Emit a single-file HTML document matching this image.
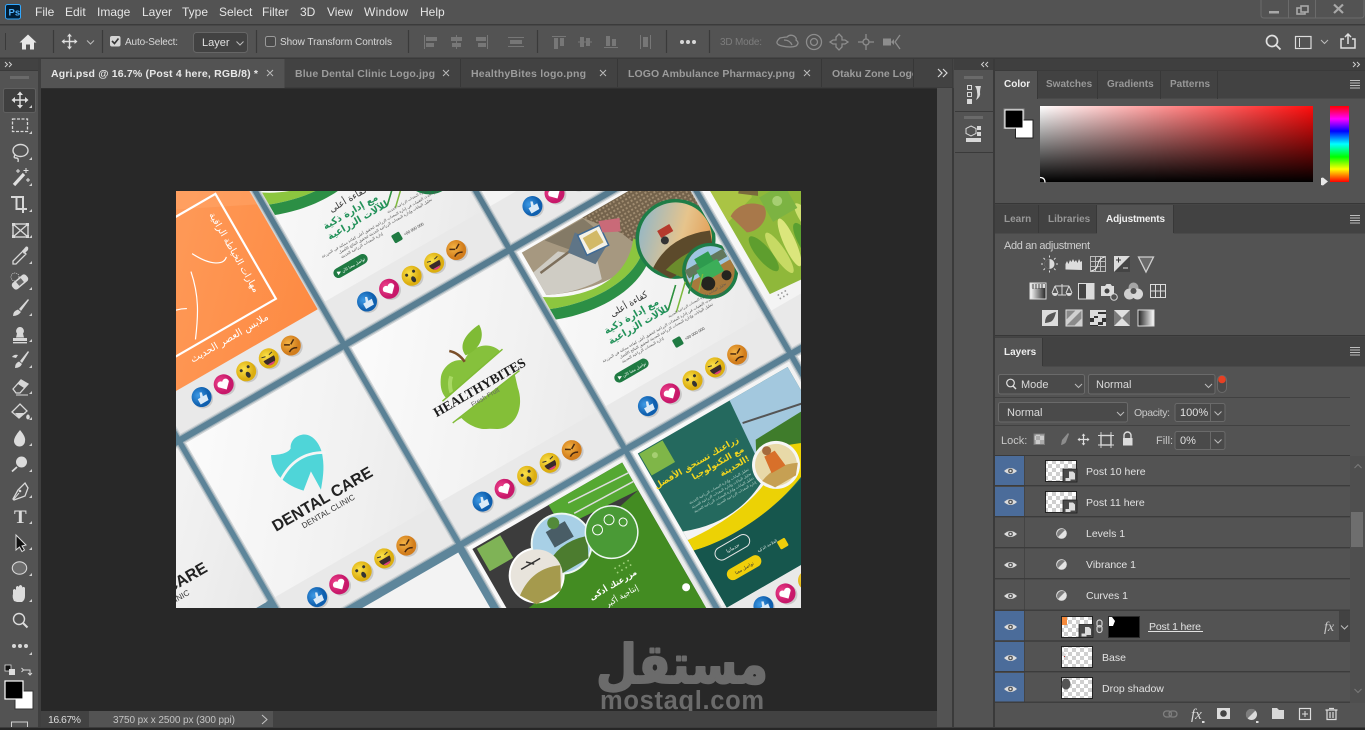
<!DOCTYPE html>
<html lang="en"><head><meta charset="utf-8"><title>Photoshop - Agri.psd</title>
<style>
html,body{margin:0;padding:0;background:#535353;width:1365px;height:730px;overflow:hidden}
svg{display:block;position:absolute;left:0;top:0}
text{font-family:"Liberation Sans",sans-serif;font-size:11px;fill:#dcdcdc;white-space:pre}
.ar{font-family:"DejaVu Sans","Noto Sans CJK SC",sans-serif}
.m{font-size:12px;fill:#e6e6e6}
.tb{font-weight:bold;fill:#9c9c9c;font-size:10.5px}
.ta{font-weight:bold;fill:#e8e8e8;font-size:10.5px}
.pt{font-weight:bold;fill:#989898;font-size:10px}
.pa{font-weight:bold;fill:#efefef;font-size:10px}
.l{font-size:10.5px;fill:#e2e2e2}
.ic{fill:none;stroke:#d8d8d8;stroke-width:1.4}
.if{fill:#d8d8d8;stroke:none}
.dim{fill:none;stroke:#8d8d8d;stroke-width:1.3}
.chev{fill:none;stroke:#a8a8a8;stroke-width:1}
.sep{stroke:#3a3a3a;stroke-width:1.2}
</style></head><body>
<svg width="1365" height="730" viewBox="0 0 1365 730" xmlns="http://www.w3.org/2000/svg">
<defs>
<clipPath id="art"><rect x="176" y="191" width="625" height="417"/></clipPath>
<clipPath id="card"><rect width="181" height="220"/></clipPath>
<clipPath id="cardS"><rect width="181" height="178"/></clipPath>
<clipPath id="tabclip"><rect x="822" y="59" width="91" height="28"/></clipPath>
<clipPath id="wm"><rect x="590" y="630" width="190" height="81"/></clipPath>
<linearGradient id="cg" x1="0" y1="0" x2="1" y2="1"><stop offset="0" stop-color="#fbfbfb"/><stop offset=".6" stop-color="#f1f1f1"/><stop offset="1" stop-color="#e8e8e8"/></linearGradient>
<linearGradient id="gut" x1="0" y1="0" x2="0" y2="1"><stop offset="0" stop-color="#557a8e"/><stop offset="1" stop-color="#5f879c"/></linearGradient>
<radialGradient id="eB" cx=".4" cy=".35"><stop offset="0" stop-color="#3f9be6"/><stop offset="1" stop-color="#0f5fae"/></radialGradient>
<radialGradient id="eP" cx=".4" cy=".35"><stop offset="0" stop-color="#f0468e"/><stop offset="1" stop-color="#c8186a"/></radialGradient>
<radialGradient id="eY" cx=".45" cy=".35"><stop offset="0" stop-color="#fbe14a"/><stop offset="1" stop-color="#dcae10"/></radialGradient>
<radialGradient id="eO" cx=".45" cy=".35"><stop offset="0" stop-color="#f5b545"/><stop offset="1" stop-color="#d27d1c"/></radialGradient>
<linearGradient id="sky1" x1="0" y1="0" x2="1" y2="1"><stop offset="0" stop-color="#7fb4d6"/><stop offset=".55" stop-color="#e6c48c"/><stop offset="1" stop-color="#e08a3a"/></linearGradient>
<linearGradient id="org" x1="0" y1="0" x2="1" y2="1"><stop offset="0" stop-color="#ffa264"/><stop offset="1" stop-color="#fd8a42"/></linearGradient>
<linearGradient id="hx" x1="0" y1="0" x2="1" y2="0"><stop offset="0" stop-color="#fff"/><stop offset="1" stop-color="#ff0d0d"/></linearGradient>
<linearGradient id="vx" x1="0" y1="0" x2="0" y2="1"><stop offset="0" stop-color="#000" stop-opacity="0"/><stop offset="1" stop-color="#000"/></linearGradient>
<linearGradient id="hue" x1="0" y1="0" x2="0" y2="1"><stop offset="0" stop-color="#f00"/><stop offset=".17" stop-color="#f0f"/><stop offset=".33" stop-color="#00f"/><stop offset=".5" stop-color="#0ff"/><stop offset=".67" stop-color="#0f0"/><stop offset=".83" stop-color="#ff0"/><stop offset="1" stop-color="#f00"/></linearGradient>
<linearGradient id="gr1" x1="0" y1="0" x2="1" y2="0"><stop offset="0" stop-color="#fff"/><stop offset="1" stop-color="#222"/></linearGradient>
<pattern id="chk" width="8" height="8" patternUnits="userSpaceOnUse"><rect width="8" height="8" fill="#fff"/><rect width="4" height="4" fill="#cfcfcf"/><rect x="4" y="4" width="4" height="4" fill="#cfcfcf"/></pattern>
<pattern id="furrow" width="4" height="4" patternUnits="userSpaceOnUse"><rect width="4" height="4" fill="#74634c"/><rect width="2" height="2" fill="#a08c70"/></pattern>

<g id="emo">
<circle cx="37" cy="201" r="10" fill="#000" opacity=".14"/><circle cx="36.500" cy="199" r="10" fill="url(#eB)"/><path d="M32 199h3l2-5 2 1-1 4h4l-1 6h-9z" fill="#dbeaf7"/>
<circle cx="63" cy="201" r="10" fill="#000" opacity=".14"/><circle cx="62" cy="199" r="10" fill="url(#eP)"/><path d="M62 205l-6-6a3.400 3.400 0 0 1 6-3 3.400 3.400 0 0 1 6 3z" fill="#fff"/>
<circle cx="89" cy="201" r="10" fill="#000" opacity=".14"/><circle cx="88" cy="199" r="10" fill="url(#eY)"/><circle cx="84" cy="196" r="1.500" fill="#333"/><circle cx="92" cy="196" r="1.500" fill="#333"/><ellipse cx="88" cy="203" rx="2.200" ry="3.200" fill="#333"/>
<circle cx="115" cy="201" r="10" fill="#000" opacity=".14"/><circle cx="114" cy="199" r="10" fill="url(#eY)"/><path d="M108 199h12c0 5-3 7-6 7s-6-2-6-7z" fill="#3a2a2a"/><path d="M110 204h8l-2 2h-4z" fill="#e0407a"/><path d="M108 195l4 1M120 195l-4 1" stroke="#333" fill="none"/>
<circle cx="140.500" cy="201" r="10" fill="#000" opacity=".14"/><circle cx="139.500" cy="199" r="10" fill="url(#eO)"/><path d="M134 195l5 3M145 195l-5 3M135 204q4-3 9 0" stroke="#4a2a10" stroke-width="1.500" fill="none"/>
</g>

<g id="base"><rect x="-2.400" y="-2.400" width="185.800" height="224.800" fill="#9fb0b9"/><rect x="-1.300" y="-1.300" width="183.600" height="222.600" fill="#d0d4d6"/><rect width="181" height="220" fill="url(#cg)"/><rect y="178" width="181" height="42" fill="#e9e9e9"/></g>
<g id="baseS"><rect x="-2.400" y="-2.400" width="185.800" height="180" fill="#9fb0b9"/><rect x="-1.300" y="-1.300" width="183.600" height="179" fill="#d0d4d6"/><rect width="181" height="178" fill="url(#cg)"/></g>

<g id="tooth">
<path d="M105 51C115 55 116 70 111.500 80C107 92 100 100 93.500 108L94 87L78 100C72 94 67 86 64.600 78C62 68 64 60 67.600 53C75 57 83 60 88 57C90 52 97 48 105 51Z" fill="#4fd5d8"/>
<path d="M63 80Q90 62 116 78" fill="none" stroke="#f5f5f5" stroke-width="2.800"/>
<text x="90" y="122" text-anchor="middle" font-weight="bold" style="font-size:16px;fill:#222" textLength="113">DENTAL CARE</text>
<text x="89" y="133" text-anchor="middle" style="font-size:8px;fill:#333" textLength="60">DENTAL CLINIC</text>
</g>
<g id="dental"><use href="#base"/><use href="#tooth"/><use href="#emo"/></g>
<g id="dentalL"><use href="#baseS"/><use href="#tooth"/></g>

<g id="healthy"><use href="#base"/>
<g clip-path="url(#card)">
<path d="M91 68C84 60 70 62 63 70C57 78 55 85 57 92L127 78C125 70 118 64 110 63C103 62 96 64 91 68Z" fill="#86c13c"/>
<path d="M72 75Q66 80 64 89" stroke="#a8d863" stroke-width="4" fill="none"/>
<path d="M91 69Q90 58 83 52" stroke="#7a4f2a" stroke-width="2.600" fill="none"/>
<path d="M95 64C93 52 105 45 122 44C122 56 112 66 95 64Z" fill="#7fbb35"/>
<path d="M54 116L128 105L124 118C122 130 112 146 95 146C86 146 82 140 76 138C68 134 62 124 60 116Z" fill="#84bf38"/>
<path d="M52 92L130 77" stroke="#7fbb35" stroke-width="1.400"/>
<path d="M50 116L134 104" stroke="#7fbb35" stroke-width="1.400"/>
<text x="91" y="103" text-anchor="middle" font-weight="bold" style="font-size:13.500px;fill:#1c1c1c;font-family:'Liberation Serif',serif" textLength="104">HEALTHYBITES</text>
<text x="91" y="112" text-anchor="middle" style="font-size:6.500px;fill:#666">Fresh Fruit</text>
<use href="#emo"/></g></g>

<g id="tractor"><use href="#base"/>
<g clip-path="url(#card)">
<path d="M4 3H181V60H110C85 78 40 70 4 52Z" fill="#a69880"/>
<path d="M74 3H181V60H110L100 36Z" fill="url(#furrow)"/>
<path d="M4 52V26L36 20L66 46L60 66C40 66 20 60 4 52Z" fill="#cfccc4"/>
<path d="M30 4H74L84 30L50 28Z" fill="#847a66"/>
<path d="M10 30L62 24" stroke="#7d6f5c" stroke-width="2.500"/>
<path d="M44 26L60 12L80 40L62 50Z" fill="#5f7587"/>
<rect x="60" y="17" width="24" height="22" fill="#f4f1e6" stroke="#3f6a96" stroke-width="1.500" transform="rotate(5 72 28)"/>
<rect x="64" y="21" width="16" height="14" fill="#d2b967"/>
<path d="M86 14L106 22L100 34L84 26Z" fill="#c96a78"/>
<path d="M0 52C30 72 80 84 108 46L112 60C88 84 40 82 0 66Z" fill="#8cc63f"/>
<path d="M0 66C40 82 88 84 112 60L114 70C86 96 36 92 0 78Z" fill="#2c8f45"/>
<circle cx="144" cy="68" r="40" fill="#1e7d47"/>
<circle cx="144" cy="68" r="36.500" fill="url(#sky1)"/>
<path d="M110 82Q140 62 178 78L170 100H120Z" fill="#5c4a2b"/><path d="M120 90Q150 82 170 92L150 104H130Z" fill="#6b8c2c"/>
<path d="M132 52h14v8h-14z" fill="#b53a2c"/><circle cx="134" cy="64" r="4" fill="#333"/>
<circle cx="158" cy="113" r="28" fill="#1e7d47"/>
<circle cx="158" cy="113" r="24.500" fill="#a7793c"/>
<path d="M134 113a24.500 24.500 0 0 1 49 0Z" fill="#9ec6e2"/>
<path d="M136 100h44v9h-44z" fill="#62775c"/>
<path d="M150 95h16v12h-16z" fill="#2e9b4e"/><path d="M146 106h24v14h-24z" fill="#3cae59"/><circle cx="150" cy="123" r="7" fill="#24241f"/><circle cx="170" cy="125" r="5" fill="#24241f"/>
<path d="M121 108L102 126M131 110L108 132M142 108L128 122M150 112L138 125" stroke="#7db93c" stroke-width="1.500"/><path d="M121 108L102 126M142 108L128 122" stroke="#2c8f45" stroke-width="1.500"/>
<text x="71" y="104" text-anchor="middle" class="ar" style="font-size:9px;fill:#333">كفاءة أعلى</text>
<text x="67" y="116" text-anchor="middle" class="ar" font-weight="bold" style="font-size:9.500px;fill:#23925a">مع إدارة ذكية</text>
<text x="69" y="127" text-anchor="middle" class="ar" font-weight="bold" style="font-size:9.500px;fill:#23925a">للآلات الزراعية</text>
<text x="132" y="133" text-anchor="middle" class="ar" style="font-size:3.500px;fill:#555">تحليل البيانات وإدارة المعدات الزراعية الحديثة</text>
<text x="90" y="139" text-anchor="middle" class="ar" style="font-size:3.800px;fill:#555">نستخدم أحدث التقنيات في إدارة المعدات الزراعية لتحقيق أعلى كفاءة ممكنة في المزرعة</text>
<text x="90" y="144" text-anchor="middle" class="ar" style="font-size:3.800px;fill:#555">تحليل البيانات وإدارة المعدات الزراعية الحديثة لتحقيق النتائج الأفضل</text>
<text x="60" y="149" text-anchor="middle" class="ar" style="font-size:3.800px;fill:#555">إدارة المعدات الزراعية الحديثة</text>
<rect x="21" y="155" width="38" height="10" rx="5" fill="#1f7a42"/><path d="M25 158l4 2-4 2z" fill="#fff"/>
<text x="43" y="162" text-anchor="middle" class="ar" style="font-size:4px;fill:#fff">تواصل معنا الآن</text>
<rect x="90" y="154" width="9" height="9" rx="1.500" fill="#1f7a42"/>
<text x="102" y="161" style="font-size:4px;fill:#444">+00 000 000</text>
<use href="#emo"/></g></g>

<g id="lettuce"><use href="#base"/>
<g clip-path="url(#card)">
<path d="M7 3H181V178L7 163Z" fill="#8fb83a"/>
<path d="M7 3H60L40 70L7 80Z" fill="#aac444"/>
<path d="M12 76C24 68 40 74 46 84C46 96 30 104 18 98Z" fill="#a8784a"/>
<path d="M30 60L46 72L58 50L44 44Z" fill="#7a6a3c"/>
<ellipse cx="22" cy="125" rx="7" ry="22" fill="#5e9e2e" transform="rotate(-10 22 125)"/>
<ellipse cx="36" cy="132" rx="6" ry="24" fill="#c7da64" transform="rotate(-4 36 132)"/>
<ellipse cx="50" cy="128" rx="6" ry="26" fill="#dbe67c" transform="rotate(6 50 128)"/>
<ellipse cx="64" cy="136" rx="7" ry="22" fill="#5a9f30"/>
<ellipse cx="78" cy="125" rx="7" ry="28" fill="#cfe070" transform="rotate(-8 78 125)"/>
<ellipse cx="94" cy="130" rx="7" ry="26" fill="#6aac36" transform="rotate(6 94 130)"/>
<ellipse cx="110" cy="128" rx="7" ry="30" fill="#c6da66"/>
<rect x="46" y="74" width="28" height="28" fill="#7cb342"/><circle cx="60" cy="86" r="5" fill="#a6cf72"/>
<g fill="#9c9c9c"><circle cx="14" cy="168" r=".9"/><circle cx="18" cy="168" r=".9"/><circle cx="22" cy="168" r=".9"/><circle cx="14" cy="172" r=".9"/><circle cx="18" cy="172" r=".9"/><circle cx="22" cy="172" r=".9"/></g>
</g></g>

<g id="orange"><use href="#base"/>
<g clip-path="url(#card)">
<rect width="181" height="181" fill="url(#org)"/>
<path d="M60 0L181 60V0Z" fill="#ffa56a" opacity=".5"/>
<rect x="28" y="30" width="122" height="121" fill="none" stroke="#fff" stroke-width="2.200"/>
<path d="M35 140C50 120 62 100 60 78M60 146C75 126 85 110 90 85M18 120C30 110 50 105 68 115M100 70C110 90 122 96 128 90" fill="none" stroke="#fff" stroke-width="1.200"/>
<text x="134" y="90" text-anchor="middle" class="ar" transform="rotate(90 134 90)" style="font-size:9.500px;fill:#fff">مهارات الخياطة الراقية</text>
<text x="90" y="165" text-anchor="middle" class="ar" style="font-size:10px;fill:#fff">ملابس العصر الحديث</text>
<use href="#emo"/></g></g>

<g id="circles"><use href="#baseS"/>
<g clip-path="url(#cardS)">
<rect x="4" y="4" width="173" height="160" fill="#3c3c3c"/>
<path d="M92 4H177V36L92 30Z" fill="#55a832"/>
<path d="M110 12L177 16M110 24L177 26" stroke="#ddd" stroke-width="1.500"/>
<path d="M4 86L60 78L100 52L177 36V178H4Z" fill="#438c22"/>
<rect x="8" y="6" width="27" height="26" fill="#7fb356"/>
<circle cx="46.500" cy="59" r="28" fill="#fff"/>
<circle cx="84" cy="44" r="31" fill="#eef7f3"/>
<circle cx="84" cy="44" r="29" fill="#a8d0e6"/><path d="M58 58Q80 40 110 50L100 70H70Z" fill="#4c7c2f"/><rect x="76" y="26" width="22" height="18" fill="#495d66"/><circle cx="87" cy="22" r="6" fill="#538a3a"/>
<circle cx="46.500" cy="59" r="26" fill="#e8e4dc"/><path d="M22 68Q46 50 72 62L60 84H32Z" fill="#a59a4d"/><path d="M36 46h22M44 42l6 6" stroke="#333" stroke-width="1.500"/>
<circle cx="133" cy="59" r="27" fill="#eef7f3"/><circle cx="133" cy="59" r="25.500" fill="#4a9a36"/>
<circle cx="122" cy="50" r="5" fill="none" stroke="#fff"/><circle cx="137" cy="47" r="5" fill="none" stroke="#fff"/><circle cx="148" cy="56" r="4" fill="none" stroke="#fff"/>
<g fill="#9fd07a"><circle cx="118" cy="92" r=".9"/><circle cx="123" cy="92" r=".9"/><circle cx="128" cy="92" r=".9"/><circle cx="133" cy="92" r=".9"/><circle cx="118" cy="97" r=".9"/><circle cx="123" cy="97" r=".9"/><circle cx="128" cy="97" r=".9"/><circle cx="133" cy="97" r=".9"/></g>
<text x="108" y="108" text-anchor="middle" class="ar" font-weight="bold" style="font-size:8px;fill:#fff">مزرعتك أذكى</text>
<text x="110" y="122" text-anchor="middle" class="ar" style="font-size:8px;fill:#fff">إنتاجية أكبر</text>
<circle cx="170" cy="144" r="4" fill="#fff"/>
</g></g>

<g id="teal"><use href="#base"/>
<g clip-path="url(#card)">
<rect x="4" y="4" width="173" height="178" fill="#24695e"/>
<path d="M110 4H177V84L105 66Z" fill="#a3c8de"/>
<path d="M110 30L177 44" stroke="#555" stroke-width="2"/>
<path d="M113 51L177 49V84L105 66Z" fill="#3f7c2b"/>
<rect x="5" y="5" width="27" height="25" fill="#7fb648"/><circle cx="18" cy="14" r="3" fill="#a6cf72"/>
<text x="98" y="44" text-anchor="end" class="ar" font-weight="bold" style="font-size:8.500px;fill:#f2d61f">زراعتك تستحق الأفضل</text>
<text x="98" y="55" text-anchor="end" class="ar" font-weight="bold" style="font-size:8.500px;fill:#f2d61f">مع التكنولوجيا</text>
<text x="98" y="66" text-anchor="end" class="ar" font-weight="bold" style="font-size:8.500px;fill:#f2d61f">الحديثة!</text>
<text x="92" y="74" text-anchor="end" class="ar" style="font-size:3.600px;fill:#b9d4cc">تحليل البيانات وإدارة المعدات الزراعية الحديثة</text>
<text x="92" y="79" text-anchor="end" class="ar" style="font-size:3.600px;fill:#b9d4cc">تحليل البيانات وإدارة المعدات الزراعية الحديثة</text>
<text x="92" y="84" text-anchor="end" class="ar" style="font-size:3.600px;fill:#b9d4cc">تحليل البيانات وإدارة المعدات الزراعية الحديثة</text>
<text x="92" y="89" text-anchor="end" class="ar" style="font-size:3.600px;fill:#b9d4cc">إدارة المعدات الزراعية الحديثة</text>
<path d="M4 94Q60 116 108 84L128 92Q70 118 4 104Z" fill="#f4f4f4"/>
<path d="M4 104C50 108 100 104 134 70L170 84C130 120 50 128 4 116Z" fill="#ecd205"/>
<path d="M4 116C50 128 130 120 177 84V182H4Z" fill="#16564d"/>
<circle cx="118" cy="83" r="24" fill="#f6f6f6"/><circle cx="118" cy="83" r="21" fill="#e8d9a8"/><path d="M98 90Q118 82 138 92L130 102H106Z" fill="#c6a053"/><path d="M112 70h12l2 18h-16z" fill="#d8702a"/><circle cx="117" cy="66" r="4.500" fill="#a56b3c"/>
<rect x="20" y="126" width="38" height="13" rx="6.500" fill="none" stroke="#e6e6e6" stroke-width="1"/>
<text x="39" y="135" text-anchor="middle" class="ar" style="font-size:5px;fill:#e6e6e6">حدمانيا</text>
<rect x="20" y="150" width="38" height="12" rx="6" fill="#f0cf0a"/>
<text x="39" y="158" text-anchor="middle" class="ar" style="font-size:4.500px;fill:#333">تواصل معنا</text>
<rect x="80" y="150" width="9" height="9" rx="1.500" fill="#f0cf0a"/>
<text x="70" y="150" text-anchor="middle" class="ar" style="font-size:4px;fill:#d6e4df">الفلاحة الذكية</text>
<use href="#emo"/></g></g>

<g id="plain"><use href="#base"/><use href="#emo"/></g>

<g id="eye"><path d="M-6.500 0Q0-6 6.500 0Q0 6-6.500 0Z" fill="#dcdcdc"/><circle r="2.400" fill="#555"/><circle r="1.100" fill="#dcdcdc"/></g>
<g id="so"><rect x="0" y="0" width="14" height="13" fill="#4a4a4a" stroke="#222" stroke-width=".8"/><path d="M6 2.500h4l2 2v6H6z" fill="#ddd"/><rect x="2.500" y="9" width="5" height="3" fill="#ddd"/></g>
<path id="tri" d="M0 3L3 0V3Z" fill="#cfcfcf"/>
<path id="burger" d="M-5-3.500H5M-5-1H5M-5 1.500H5M-5 4H5" stroke="#bdbdbd" stroke-width="1" fill="none"/>
<path id="dn" d="M-3.500-1.500L0 2L3.500-1.500" fill="none" stroke="#bcbcbc" stroke-width="1"/>
</defs>

<!-- base -->
<rect width="1365" height="730" fill="#535353"/>
<!-- menu bar -->
<rect y="24" width="1365" height="1.500" fill="#3b3b3b"/>
<rect x="5.500" y="4.500" width="15" height="14.500" rx="2" fill="#001e36" stroke="#31a8ff" stroke-width="1"/>
<text x="8.500" y="15.500" style="font-size:9.500px;font-weight:bold;fill:#4fb4ff">Ps</text>
<text class="m" x="35" y="16">File</text><text class="m" x="65" y="16">Edit</text><text class="m" x="97" y="16">Image</text><text class="m" x="142" y="16">Layer</text><text class="m" x="182" y="16">Type</text><text class="m" x="219" y="16">Select</text><text class="m" x="262" y="16">Filter</text><text class="m" x="300" y="16">3D</text><text class="m" x="327" y="16">View</text><text class="m" x="364" y="16" textLength="44">Window</text><text class="m" x="420" y="16">Help</text>
<!-- window controls -->
<path d="M1261 0v15q0 3 3 3h97q3 0 3-3V0" fill="none" stroke="#6b6b6b"/><path d="M1288.500 0v18M1315.500 0v18" stroke="#6b6b6b"/>
<rect x="1269" y="11" width="10" height="2.500" fill="#a8a8a8"/>
<rect x="1297" y="8" width="8" height="6" fill="none" stroke="#a8a8a8" stroke-width="1.600"/><rect x="1301" y="6" width="7" height="6" fill="#535353" stroke="#a8a8a8" stroke-width="1.600"/>
<path d="M1334 4.500l9 8.500M1343 4.500l-9 8.500" stroke="#a8a8a8" stroke-width="2.200"/>
<!-- options bar -->
<rect x="5" y="33" width="1" height="17" fill="#3a3a3a"/>
<path d="M28 34.500L19.500 42.500H22V49.500H26V44.500H30V49.500H34V42.500H36.500Z" fill="#e8e8e8"/>
<path class="sep" d="M53.500 30v23M102.500 30v23M256.500 30v23M408.500 30v23M537.500 30v23M666.500 30v23M709.500 30v23"/>
<g transform="translate(69.500 41.500)"><path d="M0-7V7M-7 0H7" stroke="#dedede" stroke-width="1.400"/><path d="M0-8l-2.500 3h5zM0 8l-2.500-3h5zM-8 0l3-2.500v5zM8 0l-3-2.500v5z" fill="#dedede"/></g>
<use href="#dn" x="90.500" y="42"/>
<rect x="110" y="36" width="10.500" height="10.500" rx="2" fill="#d4d4d4"/><path d="M112 41l2.500 2.500 4-5" fill="none" stroke="#333" stroke-width="1.600"/>
<text x="125" y="45" style="fill:#d8d8d8;font-size:10px" textLength="53">Auto-Select:</text>
<rect x="193.500" y="32.500" width="54" height="20" rx="3" fill="#424242" stroke="#666"/>
<text x="202" y="46" style="fill:#e0e0e0">Layer</text><use href="#dn" x="240" y="43"/>
<rect x="265.500" y="36.500" width="10" height="10" rx="2" fill="#4a4a4a" stroke="#9a9a9a"/>
<text x="280" y="45" style="fill:#d8d8d8;font-size:10px" textLength="112">Show Transform Controls</text>
<!-- align icons -->
<g fill="#777" stroke="none">
<rect x="424" y="35" width="1" height="14"/><rect x="426" y="37" width="11" height="4"/><rect x="426" y="43" width="8" height="4"/>
<rect x="456" y="35" width="1" height="14"/><rect x="451" y="37" width="11" height="4"/><rect x="452" y="43" width="9" height="4"/>
<rect x="487" y="35" width="1" height="14"/><rect x="476" y="37" width="10" height="4"/><rect x="478" y="43" width="8" height="4"/>
<rect x="508" y="37" width="16" height="1"/><rect x="510" y="40" width="12" height="4"/><rect x="508" y="46" width="16" height="1"/>
<rect x="552" y="36" width="14" height="1"/><rect x="554" y="38" width="4" height="11"/><rect x="560" y="38" width="4" height="8"/>
<rect x="578" y="41.500" width="14" height="1"/><rect x="580" y="37" width="4" height="10"/><rect x="586" y="38" width="4" height="8"/>
<rect x="604" y="47" width="14" height="1"/><rect x="606" y="36" width="4" height="10"/><rect x="612" y="39" width="4" height="7"/>
<rect x="640" y="35" width="1" height="14"/><rect x="650" y="35" width="1" height="14"/><rect x="643" y="37" width="5" height="10"/>
</g>
<circle cx="682" cy="42" r="2" fill="#d8d8d8"/><circle cx="688" cy="42" r="2" fill="#d8d8d8"/><circle cx="694" cy="42" r="2" fill="#d8d8d8"/>
<text x="720" y="45" style="fill:#7d7d7d;font-size:10px" textLength="42">3D Mode:</text>
<g class="dim">
<path d="M782 46q-9-2-2-8q5-1 7-1q3-3 7-1q3 2 2 4q4 3 0 6q-5 2-14 0zM784 40q6 0 8 5"/>
<circle cx="814" cy="42" r="7.500"/><circle cx="814" cy="42" r="3.500"/>
<path d="M839 34l3 3v3h3l3 2-3 2h-3v3l-3 3-3-3v-3h-3l-3-2 3-2h3v-3z"/>
<circle cx="866" cy="42" r="3"/><path d="M866 34v5M866 45v5M858 42h5M869 42h5"/>
</g>
<path d="M883 38.500h8v7h-8z M891 42l3-3v6z" fill="#8d8d8d"/><path d="M900 35l-5 7 5 7" class="dim"/>
<circle cx="1272" cy="41" r="5.500" fill="none" stroke="#e0e0e0" stroke-width="1.700"/><path d="M1276 45l4.500 4.500" stroke="#e0e0e0" stroke-width="1.800"/>
<rect x="1295.500" y="36.500" width="15.500" height="12" fill="none" stroke="#dcdcdc" stroke-width="1.200"/><path d="M1299.500 38v9" stroke="#dcdcdc"/>
<use href="#dn" x="1324.500" y="41.500"/>
<path d="M1344 39h-3v9h14v-9h-3M1348 44V34M1345 37l3-3 3 3" fill="none" stroke="#e0e0e0" stroke-width="1.500"/>
<rect y="57.500" width="1365" height="1.500" fill="#3a3a3a"/>

<!-- left tool panel -->
<rect x="0" y="59" width="38" height="11" fill="#424242"/>
<path d="M5 62l2.500 2.500L5 67M9 62l2.500 2.500L9 67" fill="none" stroke="#cfcfcf"/>
<rect x="38" y="59" width="3" height="668" fill="#3f3f3f"/>
<rect x="0" y="70" width="38" height="1" fill="#3a3a3a"/>
<rect x="10" y="76" width="19" height="3" fill="#6a6a6a"/>
<rect x="3.500" y="88.500" width="32" height="24" rx="2" fill="#3f3f3f" stroke="#5f5f5f"/>

<g transform="translate(20 100)"><path d="M0-7V7M-7 0H7" stroke="#e0e0e0" stroke-width="1.400"/><path d="M0-8.500l-3 3.500h6zM0 8.500l-3-3.500h6zM-8.500 0l3.500-3v6zM8.500 0l-3.500-3v6z" fill="#e0e0e0"/></g>
<rect x="12.500" y="119" width="15" height="12.500" fill="none" stroke="#d8d8d8" stroke-width="1.300" stroke-dasharray="3 1.500"/>
<g class="ic"><ellipse cx="20.500" cy="150.500" rx="7.500" ry="6"/><path d="M15 155q-2 3 1 3t2 4"/></g>
<g transform="translate(20 177)"><path d="M-6 8L4-3" stroke="#e0e0e0" stroke-width="3.200"/><path d="M6-9v5M3.500-6.500h5M-2-8v4M-4-6h4M8 1v4M6 3h4" stroke="#e0e0e0" fill="none"/></g>
<path d="M11 197h5.500V209H27M16.500 197H23V203M23 203V213" fill="none" stroke="#d8d8d8" stroke-width="2"/>
<g class="ic"><rect x="13" y="224" width="15" height="13"/><path d="M13 224l15 13M28 224l-15 13"/></g><g class="if"><rect x="12" y="223" width="3" height="3"/><rect x="26" y="223" width="3" height="3"/><rect x="12" y="235" width="3" height="3"/><rect x="26" y="235" width="3" height="3"/></g>
<g transform="translate(20 256)"><path d="M-7 8L-7 5L3-5L6-2L-4 8Z" fill="#525252" stroke="#d8d8d8" stroke-width="1.300"/><path d="M2-5L6-9.500Q9-10 8-6L4-2Z" fill="#d8d8d8"/></g>
<g transform="translate(20 282) rotate(-40)"><rect x="-9" y="-4" width="18" height="8" rx="3" fill="#d8d8d8"/><rect x="-3" y="-2.500" width="6" height="5" fill="#666"/></g><circle cx="15" cy="277" r="4" fill="none" stroke="#d8d8d8" stroke-width=".8" stroke-dasharray="1 1"/>
<g transform="translate(20 308)"><path d="M8-9L-1 1L1 3L9-8Z" fill="#d8d8d8"/><path d="M-2 1.500Q-7 3-7 8Q-2 8 1 4Z" fill="#d8d8d8"/></g>
<g class="if"><path d="M20 327a4 4 0 0 1 3 6.500l1 4h-8l1-4a4 4 0 0 1 3-6.500z"/><rect x="13" y="338" width="14" height="3"/><rect x="13" y="342" width="14" height="1.400"/></g>
<g transform="translate(20 360)"><path d="M8-9L0 1L2 3L9-8Z" fill="#d8d8d8"/><path d="M-1 1.500Q-5 3-5 8Q0 8 2 4Z" fill="#d8d8d8"/><path d="M-8-3q2-3 6-2l-2 3z" fill="#d8d8d8"/></g>
<g transform="translate(20 386)"><path d="M-7 3L1-6L8-2L0 7H-4Z" fill="none" stroke="#d8d8d8" stroke-width="1.300"/><path d="M-2-2L1-6L8-2L4 2Z" fill="#d8d8d8"/><path d="M-4 9H8" stroke="#d8d8d8"/></g>
<g transform="translate(20 412)"><path d="M-8 0L0-8L7-1L-1 6Z" fill="none" stroke="#d8d8d8" stroke-width="1.300"/><path d="M-5 1H6L-1 6Z" fill="#d8d8d8"/><ellipse cx="8" cy="5" rx="1.800" ry="2.500" fill="#d8d8d8"/></g>
<path d="M20 430q6 7 5 11a5.500 5.500 0 0 1-11 0q0-4 6-11z" fill="#dcdcdc"/>
<circle cx="21.500" cy="462" r="5.500" fill="#dcdcdc"/><path d="M17 467l-5 4.500" stroke="#dcdcdc" stroke-width="1.800"/>
<path d="M25 483l3 5-3 8-11 4-1-1 5-9z" fill="none" stroke="#d8d8d8" stroke-width="1.300"/><circle cx="20" cy="491" r="1.300" fill="#d8d8d8"/><path d="M14 499l5-6" stroke="#d8d8d8"/>
<text x="14" y="523" style="font-family:'Liberation Serif',serif;font-size:19px;font-weight:bold;fill:#dcdcdc">T</text>
<path d="M16 535V550L19.500 547L22 551.500L24.500 550L22 546L26 545Z" fill="#111" stroke="#dcdcdc" stroke-width="1"/>
<ellipse cx="19.500" cy="568" rx="7.200" ry="6.200" fill="#6d6d6d" stroke="#d8d8d8" stroke-width="1.100"/>
<path d="M14 601Q12 597 13 594L13 590Q14.500 588 16 590L16 587Q17.500 585 19 587L19 586Q20.500 584 22 586L22.500 587.500Q24 586 25 588L25 596Q25 600 22 602L17 602Z" fill="#dcdcdc"/>
<circle cx="19" cy="619" r="5.500" fill="none" stroke="#dcdcdc" stroke-width="1.400"/><path d="M23 623l4.500 4.500" stroke="#dcdcdc" stroke-width="2"/>
<circle cx="14" cy="646" r="2" fill="#d8d8d8"/><circle cx="20" cy="646" r="2" fill="#d8d8d8"/><circle cx="26" cy="646" r="2" fill="#d8d8d8"/>
<use href="#tri" x="29" y="105"/><use href="#tri" x="29" y="131"/><use href="#tri" x="29" y="157"/><use href="#tri" x="29" y="183"/><use href="#tri" x="29" y="209"/><use href="#tri" x="29" y="235"/><use href="#tri" x="29" y="261"/><use href="#tri" x="29" y="287"/><use href="#tri" x="29" y="313"/><use href="#tri" x="29" y="339"/><use href="#tri" x="29" y="365"/><use href="#tri" x="29" y="391"/><use href="#tri" x="29" y="417"/><use href="#tri" x="29" y="443"/><use href="#tri" x="29" y="469"/><use href="#tri" x="29" y="495"/><use href="#tri" x="29" y="521"/><use href="#tri" x="29" y="547"/><use href="#tri" x="29" y="573"/><use href="#tri" x="29" y="599"/><use href="#tri" x="29" y="652"/>
<rect x="5" y="665" width="6" height="6" fill="#111" stroke="#ddd" stroke-width=".8"/><rect x="9" y="669" width="6" height="6" fill="#ddd"/>
<path d="M23 670h7v5M21.500 668l2 2-2 2M28 673l2 2 2-2" fill="none" stroke="#d8d8d8"/>
<rect x="15" y="691" width="18" height="18" fill="#fff" stroke="#333"/>
<rect x="5" y="681" width="18" height="18" fill="#000" stroke="#fff" stroke-width="1.200"/>
<path d="M11.500 727v-5h16v5" fill="none" stroke="#cfcfcf"/>

<!-- canvas -->
<rect x="41" y="88" width="896" height="623" fill="#282828"/>
<!-- tabs -->
<rect x="41" y="59" width="912" height="28.500" fill="#424242"/>
<rect x="41" y="59" width="243.500" height="29" fill="#535353"/>
<path d="M460.500 59v28M617.500 59v28M821.500 59v28M913.500 59v28M953 59v29" stroke="#373737"/>
<rect x="41" y="87.500" width="912" height="1" fill="#373737"/>
<rect x="41" y="87" width="243.500" height="1" fill="#535353"/>
<text class="ta" x="51" y="77" textLength="207">Agri.psd @ 16.7% (Post 4 here, RGB/8) *</text>
<text class="tb" x="295" y="77" textLength="140">Blue Dental Clinic Logo.jpg</text>
<text class="tb" x="471" y="77" textLength="115">HealthyBites logo.png</text>
<text class="tb" x="628" y="77" textLength="167">LOGO Ambulance Pharmacy.png</text>
<g clip-path="url(#tabclip)"><text class="tb" x="832" y="77">Otaku Zone Logo.png</text></g>
<path d="M267 70l6 6M273 70l-6 6M443 70l6 6M449 70l-6 6M600 70l6 6M606 70l-6 6M804 70l6 6M810 70l-6 6" stroke="#bcbcbc" stroke-width="1" fill="none"/>
<path d="M938 69l4 4-4 4M943 69l4 4-4 4" fill="none" stroke="#d8d8d8" stroke-width="1.200"/>
<!-- canvas scrollbar strip -->
<rect x="937" y="88" width="16" height="639" fill="#535353"/>
<rect x="952" y="88" width="2" height="639" fill="#3a3a3a"/>

<!-- artwork -->
<g clip-path="url(#art)">
<rect x="176" y="191" width="625" height="417" fill="url(#gut)"/>
<use href="#dentalL" transform="translate(186 443) rotate(-30) translate(-191 0)"/>
<use href="#dental" transform="translate(186 443) rotate(-30)"/>
<use href="#healthy" transform="translate(186 443) rotate(-30) translate(191 0)"/>
<use href="#tractor" transform="translate(186 443) rotate(-30) translate(382 0)"/>
<use href="#lettuce" transform="translate(186 443) rotate(-30) translate(573 0)"/>
<use href="#orange" transform="translate(186 443) rotate(-30) translate(0 -231)"/>
<use href="#tractor" transform="translate(186 443) rotate(-30) translate(191 -231)"/>
<use href="#plain" transform="translate(186 443) rotate(-30) translate(382 -231)"/>
<path d="M70 231H181V295H70Z" transform="translate(186 443) rotate(-30)" fill="#f3f3f3"/>
<use href="#circles" transform="translate(186 443) rotate(-30) translate(191 231)"/>
<use href="#teal" transform="translate(186 443) rotate(-30) translate(382 231)"/>
<use href="#base" transform="translate(186 443) rotate(-30) translate(573 231)"/>
</g>

<!-- watermark -->
<g clip-path="url(#wm)">
<text transform="translate(682 683) scale(.87 1)" x="0" y="0" text-anchor="middle" class="ar" font-weight="bold" stroke="#6b6b6b" stroke-width="2" stroke-linejoin="round" style="font-size:54px;fill:#6b6b6b">مستقل</text>
<text x="682" y="709" text-anchor="middle" font-weight="bold" style="font-size:25.500px;fill:#6b6b6b" textLength="164">mostaql.com</text>
</g>

<!-- status bar -->
<rect x="41" y="711" width="896" height="16" fill="#424242"/>
<rect x="89" y="711" width="184" height="16" fill="#535353"/>
<text x="48" y="723" style="fill:#dcdcdc;font-size:10.5px" textLength="33">16.67%</text>
<text x="113" y="723" style="fill:#c4c4c4;font-size:10px" textLength="122">3750 px x 2500 px (300 ppi)</text>
<path d="M262 715l5 4.500-5 4.500" fill="none" stroke="#c4c4c4"/>
<rect y="727.500" width="1365" height="2.500" fill="#262626"/>

<!-- right dock -->
<rect x="954" y="59" width="411" height="11" fill="#3f3f3f"/>
<path d="M984 62l-2.500 2.500L984 67M988 62l-2.500 2.500L988 67M1353 62l2.500 2.500-2.500 2.500M1357 62l2.500 2.500-2.500 2.500" fill="none" stroke="#cfcfcf"/>
<rect x="954" y="70" width="39" height="657" fill="#535353"/>
<rect x="993" y="59" width="2" height="668" fill="#3a3a3a"/>
<path d="M955 111.500h38M955 152.500h38" stroke="#3a3a3a"/>
<rect x="964" y="76" width="19" height="3" fill="#6a6a6a"/><rect x="964" y="116" width="19" height="3" fill="#6a6a6a"/>
<g fill="none" stroke="#d8d8d8"><rect x="967.500" y="85.500" width="4" height="4"/><rect x="967.500" y="92.500" width="4" height="4"/></g><rect x="967" y="99" width="5" height="5" fill="#d8d8d8"/>
<path d="M975 86h6q-1 3-1 6q1 5-4 8q2-4 1-8q0-3-2-6z" fill="#d8d8d8"/>
<path d="M971 126l5 2.500v5l-5 2.500-5-2.500v-5z" fill="none" stroke="#d8d8d8"/><rect x="977" y="126" width="4" height="4" fill="#d8d8d8"/><rect x="977" y="132" width="4" height="4" fill="#d8d8d8"/><rect x="966" y="138" width="15" height="4" fill="#d8d8d8"/>

<!-- color panel -->
<rect x="995" y="70" width="370" height="28.500" fill="#424242"/>
<path d="M995 70.500h370" stroke="#3a3a3a"/>
<rect x="995" y="71" width="42.500" height="28" fill="#535353"/>
<path d="M1037.500 71v28M1097.500 71v28M1160.500 71v28M1217.500 71v28" stroke="#383838"/>
<text class="pa" x="1004" y="87">Color</text><text class="pt" x="1046" y="87">Swatches</text><text class="pt" x="1107" y="87">Gradients</text><text class="pt" x="1170" y="87">Patterns</text>
<use href="#burger" x="1355" y="84"/>
<rect x="1004" y="109" width="20" height="19.500" fill="none" stroke="#8a8a8a"/>
<rect x="1015.500" y="120" width="17.500" height="18" fill="#fff" stroke="#222"/>
<rect x="1005" y="110" width="18" height="18" fill="#000" stroke="#fff" stroke-width="1"/>
<rect x="1040" y="106" width="273" height="76" fill="url(#hx)"/>
<rect x="1040" y="106" width="273" height="76" fill="url(#vx)"/>
<path d="M1040 177.500q5 0 5 5" fill="none" stroke="#fff" stroke-width="1.200"/>
<rect x="1330" y="106" width="19" height="76" fill="url(#hue)"/>
<path d="M1321 178v7l2 .5 5-4-5-4z" fill="#e8e8e8"/>
<rect x="995" y="203" width="370" height="1.500" fill="#373737"/>

<!-- adjustments panel -->
<rect x="995" y="205" width="370" height="28.500" fill="#424242"/>
<rect x="1097" y="205" width="76.500" height="29" fill="#535353"/>
<path d="M1038.500 205v28M1096.500 205v28M1173.500 205v28" stroke="#383838"/>
<text class="pt" x="1004" y="222">Learn</text><text class="pt" x="1048" y="222">Libraries</text><text class="pa" x="1106" y="222" textLength="59">Adjustments</text>
<use href="#burger" x="1355" y="219"/>
<text x="1004" y="249" style="fill:#cfcfcf" textLength="86">Add an adjustment</text>

<!-- row1 -->
<g transform="translate(1049.500 264)"><circle r="5" fill="#dcdcdc"/><path d="M0-5a5 5 0 0 0 0 10z" fill="#555"/><path d="M0-8.500v2M0 6.500v2M-8.500 0h2M6.500 0h2M-6-6l1.500 1.500M6-6l-1.500 1.500M-6 6l1.500-1.500M6 6l-1.500-1.500" stroke="#dcdcdc"/></g>
<path d="M1065.500 269.500V264l1.500-3 1.500 3 1.500-4 1.500 2 1.500-3 1.500 3 1.500-2 1.500 3 1.500-4 1.500 3 1.500-1v9z" fill="#dcdcdc"/>
<g fill="none" stroke="#bcbcbc"><rect x="1090.500" y="256.500" width="15" height="15"/><path d="M1095.500 256.500v15M1100.500 256.500v15M1090.500 261.500h15M1090.500 266.500h15"/></g><path d="M1091 271q6-1 7-7t7-7" fill="none" stroke="#e8e8e8"/>
<rect x="1114" y="256" width="16" height="16" fill="#dcdcdc"/><path d="M1114 272l16-16v16z" fill="#444"/><path d="M1116 260h5M1118.500 257.500v5" stroke="#333"/><path d="M1123 268h5" stroke="#ddd"/>
<path d="M1138.500 257h15l-7.500 15z" fill="#6a6a6a" stroke="#cfcfcf" stroke-width="1.300"/>
<!-- row2 -->
<rect x="1030" y="283" width="16" height="16" fill="url(#gr1)" stroke="#dcdcdc"/><path d="M1031 284h14v4h-14z" fill="#dcdcdc"/><path d="M1033 284v5M1036 284v5M1039 284v5M1042 284v5" stroke="#444"/>
<path d="M1062 284v11M1058 295h8M1055 286h14M1055 286l-3 7M1055 286l3 7M1069 286l-3 7M1069 286l3 7" fill="none" stroke="#d8d8d8"/><path d="M1052 293h6a3 3 0 0 1-6 0zM1066 293h6a3 3 0 0 1-6 0z" fill="#d8d8d8"/>
<rect x="1078.500" y="283.500" width="15.500" height="15.500" fill="#444" stroke="#dcdcdc"/><rect x="1086" y="283.500" width="8" height="15.500" fill="#dcdcdc"/>
<path d="M1101 286h4l1.500-2h4l1.500 2h2v10h-13z" fill="#dcdcdc"/><circle cx="1107" cy="291" r="2.500" fill="#444"/><circle cx="1114" cy="297" r="3.300" fill="#535353" stroke="#d8d8d8"/>
<circle cx="1133.500" cy="287.500" r="5" fill="#a5a5a5"/><circle cx="1129.500" cy="294" r="5.500" fill="#cfcfcf"/><circle cx="1137.500" cy="294" r="5.500" fill="#d8d8d8"/><circle cx="1133.500" cy="291" r="3" fill="#555"/>
<g fill="none" stroke="#dcdcdc"><rect x="1150.500" y="284.500" width="15" height="13"/><path d="M1155.500 284.500v13M1160.500 284.500v13M1150.500 291h15"/></g>
<!-- row3 -->
<rect x="1042" y="310" width="16" height="16" fill="#dcdcdc"/><path d="M1045 323q0-7 5-9t6-2q-2 9-6 10t-5 1z" fill="#555"/>
<rect x="1066" y="310" width="16" height="16" fill="#8a8a8a" stroke="#dcdcdc"/><path d="M1066 320l10-10h6l-16 16zM1074 326l8-8v8z" fill="#d0d0d0"/>
<rect x="1090" y="310" width="16" height="16" fill="#dcdcdc"/><path d="M1090 322h4v-4h4v-4h8v-2h-8v4h-4v2h-4zM1090 326h8v-4h4v-4h4v4h-3v3h-13z" fill="#333"/>
<rect x="1114" y="310" width="16" height="16" fill="#e0e0e0"/><path d="M1114 310l8 8-8 8zM1130 310l-8 8 8 8z" fill="#7a7a7a"/>
<rect x="1138" y="310" width="16" height="16" fill="url(#gr1)" stroke="#dcdcdc" transform="matrix(-1 0 0 1 2292 0)"/>
<rect x="995" y="335" width="370" height="1.500" fill="#373737"/>

<!-- layers panel -->
<rect x="995" y="337" width="370" height="29.500" fill="#424242"/>
<rect x="995" y="338" width="47.500" height="29" fill="#535353"/><path d="M1042.500 338v28" stroke="#383838"/>
<text class="pa" x="1004" y="355">Layers</text><use href="#burger" x="1355" y="351"/>
<rect x="998.500" y="374.500" width="86" height="19.500" rx="2" fill="#4a4a4a" stroke="#6a6a6a"/>
<circle cx="1010.500" cy="383" r="3.800" fill="none" stroke="#e0e0e0" stroke-width="1.200"/><path d="M1013 386l3 3" stroke="#e0e0e0" stroke-width="1.400"/>
<text x="1021" y="388" style="fill:#dadada">Mode</text><use href="#dn" x="1078.500" y="385.500"/>
<rect x="1088.500" y="374.500" width="126.500" height="19.500" rx="2" fill="#4a4a4a" stroke="#6a6a6a"/><text x="1096" y="388" style="fill:#dadada">Normal</text><use href="#dn" x="1208.500" y="385.500"/>
<rect x="1217.500" y="375.500" width="9" height="17" rx="4.500" fill="#4a4a4a" stroke="#6a6a6a"/><circle cx="1222" cy="379.500" r="3.800" fill="#e74023"/>
<path d="M995 397.500h355" stroke="#414141"/>
<rect x="998.500" y="402.500" width="129" height="19.500" rx="2" fill="#4a4a4a" stroke="#6a6a6a"/><text x="1007" y="416" style="fill:#dadada">Normal</text><use href="#dn" x="1120.500" y="413.500"/>
<text x="1134" y="416" style="fill:#c8c8c8;font-size:10.5px" textLength="36">Opacity:</text>
<rect x="1175" y="403.500" width="50" height="18" rx="2" fill="#4a4a4a" stroke="#6a6a6a"/><path d="M1210.500 403.500v18" stroke="#6a6a6a"/><text x="1180" y="416" style="fill:#e0e0e0">100%</text><use href="#dn" x="1218" y="413"/>
<path d="M995 425.500h355" stroke="#414141"/>
<text x="1001" y="444" style="fill:#c8c8c8">Lock:</text>
<rect x="1034" y="434" width="10.500" height="10.500" fill="url(#chk)" stroke="#8a8a8a" opacity=".7"/>
<path d="M1068 433l-6 7-1 5q4-1 5-3l3-8z" fill="#8d8d8d"/>
<g transform="translate(1083.500 439.500) scale(.75)"><path d="M0-7V7M-7 0H7" stroke="#dedede" stroke-width="1.600"/><path d="M0-8l-2.500 3h5zM0 8l-2.500-3h5zM-8 0l3-2.500v5zM8 0l-3-2.500v5z" fill="#dedede"/></g>
<g class="ic" stroke-width="1.100"><rect x="1101" y="435.500" width="10" height="9.500"/><path d="M1098 435.500h16M1101 432v16M1111 432v16M1098 445h16" stroke-width=".9"/></g>
<path d="M1124 438v-2.500a3.500 3.500 0 0 1 7 0V438" fill="none" stroke="#dcdcdc" stroke-width="1.400"/><rect x="1123" y="438" width="9.500" height="7.500" fill="#dcdcdc"/>
<text x="1156" y="444" style="fill:#c8c8c8">Fill:</text>
<rect x="1175" y="431.500" width="50" height="18" rx="2" fill="#4a4a4a" stroke="#6a6a6a"/><path d="M1210.500 431.500v18" stroke="#6a6a6a"/><text x="1180" y="444" style="fill:#e0e0e0">0%</text><use href="#dn" x="1218" y="441"/>
<rect x="995" y="455" width="355" height="1" fill="#3a3a3a"/>

<!-- layer rows -->
<g fill="#4b6c9a"><rect x="995" y="456" width="29" height="30"/><rect x="995" y="487" width="29" height="30"/><rect x="995" y="611" width="29" height="30"/><rect x="995" y="642" width="29" height="30"/><rect x="995" y="673" width="29" height="29"/></g>
<path d="M1024.500 456v246" stroke="#444"/>
<path d="M995 485.700h355M995 516.700h355M995 547.700h355M995 578.700h355M995 610.200h355M995 641h355M995 671.700h355M995 702.200h370" stroke="#3c3c3c" stroke-width="1.400"/>
<use href="#eye" x="1010.500" y="471"/><use href="#eye" x="1010.500" y="502"/><use href="#eye" x="1010.500" y="534"/><use href="#eye" x="1010.500" y="565"/><use href="#eye" x="1010.500" y="596"/><use href="#eye" x="1010.500" y="627"/><use href="#eye" x="1010.500" y="658"/><use href="#eye" x="1010.500" y="689"/>

<rect x="1045.500" y="460.500" width="31" height="21" fill="url(#chk)" stroke="#222"/><use href="#so" x="1063" y="469"/><text class="l" x="1086" y="475">Post 10 here</text>
<rect x="1045.500" y="491.500" width="31" height="21" fill="url(#chk)" stroke="#222"/><use href="#so" x="1063" y="500"/><text class="l" x="1086" y="506">Post 11 here</text>
<circle cx="1061.500" cy="533.500" r="5.300" fill="#e4e4e4"/><path d="M1065 530a5 5 0 0 0-7 7z" fill="#7d7d7d"/><text class="l" x="1086" y="537">Levels 1</text>
<circle cx="1061.500" cy="564.500" r="5.300" fill="#e4e4e4"/><path d="M1065 561a5 5 0 0 0-7 7z" fill="#7d7d7d"/><text class="l" x="1086" y="568">Vibrance 1</text>
<circle cx="1061.500" cy="595.500" r="5.300" fill="#e4e4e4"/><path d="M1065 592a5 5 0 0 0-7 7z" fill="#7d7d7d"/><text class="l" x="1086" y="599">Curves 1</text>

<rect x="1061.500" y="616.500" width="31" height="21" fill="url(#chk)" stroke="#222"/><path d="M1062 617h5v8h-5z" fill="#f58a3c"/><use href="#so" x="1079" y="624.500"/>
<rect x="1097" y="620" width="5" height="7" rx="2.500" fill="none" stroke="#cfcfcf" stroke-width="1.200"/><rect x="1097" y="625.500" width="5" height="7" rx="2.500" fill="none" stroke="#cfcfcf" stroke-width="1.200"/>
<rect x="1108.500" y="616.500" width="31" height="21" fill="#000" stroke="#2a2a2a"/><path d="M1109 617h3l3 4-2 5h-4z" fill="#fff"/>
<text class="l" x="1149" y="630" textLength="52">Post 1 here</text><path d="M1148 631.500h55" stroke="#e2e2e2" stroke-width="1"/>
<text x="1324" y="631" style="font-family:'Liberation Serif',serif;font-style:italic;font-size:14px;fill:#c8c8c8">fx</text>
<rect x="1339" y="611" width="11" height="30" fill="#424242"/><use href="#dn" x="1344.500" y="627"/>

<rect x="1061.500" y="646.500" width="31" height="21" fill="url(#chk)" stroke="#222"/><path d="M1062 650l3 4 2-1-3 5z" fill="#d9d9d9"/><rect x="1064" y="656" width="1" height="1" fill="#b33"/><text class="l" x="1102" y="661">Base</text>
<rect x="1061.500" y="677.500" width="31" height="21" fill="url(#chk)" stroke="#222"/><ellipse cx="1066" cy="684" rx="4.500" ry="5.500" fill="#555"/><text class="l" x="1102" y="692">Drop shadow</text>

<!-- layers scrollbar -->
<rect x="1350" y="456" width="15" height="247" fill="#4f4f4f"/>
<rect x="1351" y="512" width="12" height="35" fill="#6e6e6e"/>
<path d="M1354.500 468l3.500-3.500 3.500 3.500M1354.500 689l3.500 3.500 3.500-3.500" fill="none" stroke="#7a7a7a"/>

<!-- bottom toolbar -->
<g fill="none" stroke="#7f7f7f" stroke-width="1.300"><rect x="1163.500" y="711" width="8" height="6" rx="3"/><rect x="1169" y="711" width="8" height="6" rx="3"/></g>
<text x="1191" y="719" style="font-family:'Liberation Serif',serif;font-style:italic;font-size:15px;fill:#d8d8d8">fx</text><rect x="1202" y="721" width="2.500" height="2" fill="#ddd"/>
<rect x="1217" y="708" width="13" height="11" fill="#dcdcdc"/><circle cx="1223.500" cy="713.500" r="3.300" fill="#444"/>
<circle cx="1251.500" cy="714.500" r="5.500" fill="#dcdcdc"/><path d="M1255.500 710.500a5.500 5.500 0 0 0-8 8z" fill="#7d7d7d"/><rect x="1256" y="721" width="2.500" height="2" fill="#ddd"/>
<path d="M1272 708h5l2 2h5v9h-12z" fill="#d8d8d8"/>
<rect x="1299.500" y="708.500" width="11" height="11" fill="none" stroke="#dcdcdc" stroke-width="1.200"/><path d="M1305 711v6M1302 714h6" stroke="#dcdcdc"/>
<path d="M1327 710.500v9h9v-9M1325.500 710h12M1329 708.500h5M1330 712v6M1333 712v6" fill="none" stroke="#dcdcdc" stroke-width="1.200"/>
</svg>
</body></html>
